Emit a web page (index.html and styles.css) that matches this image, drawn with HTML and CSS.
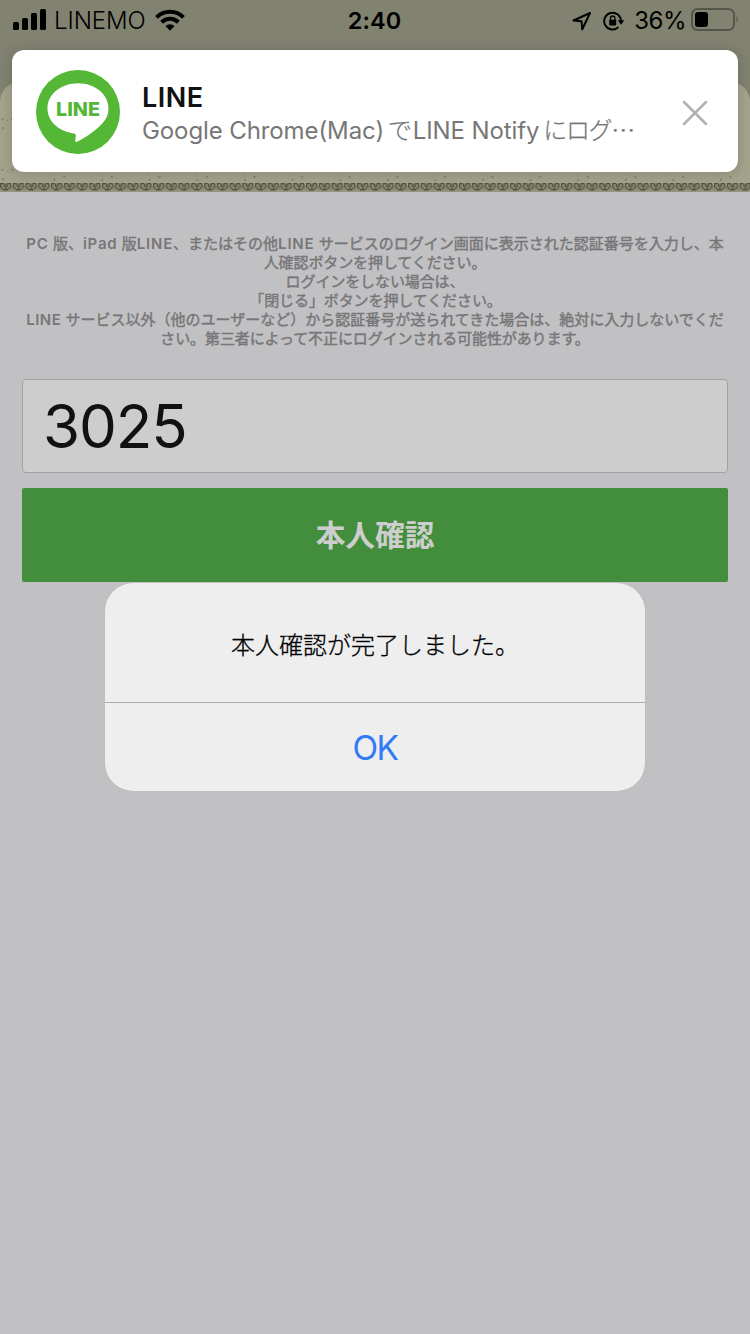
FILE: index.html
```
<!DOCTYPE html>
<html lang="ja">
<head>
<meta charset="utf-8">
<title>本人確認</title>
<link rel="stylesheet" href="styles.css">
</head>
<body>
<div class="screen">
  <header class="header">
    <div class="status">
      <div class="status-side">
        <svg class="signal" width="34" height="22" viewBox="0 0 34 22"><rect x="0" y="13" width="6" height="8" rx="1.6"/><rect x="9" y="9" width="6" height="12" rx="1.6"/><rect x="18" y="4" width="6" height="17" rx="1.6"/><rect x="27" y="0" width="6" height="21" rx="1.6"/></svg>
        <span class="carrier">LINEMO</span>
        <svg class="wifi" width="30" height="22" viewBox="0 0 30 22"><g fill="none" stroke="#000" stroke-width="4"><path d="M1.5 8.3a19 19 0 0 1 27 0"/><path d="M6.6 13.3a12 12 0 0 1 16.8 0"/></g><path d="M15 21.7l-4.6-4.6a6.5 6.5 0 0 1 9.2 0z"/></svg>
      </div>
      <span class="time">2:40</span>
      <div class="status-side status-right">
        <svg class="location" width="20" height="20" viewBox="0 0 20 20"><path d="M18 2L1.500 9.500l8 .8.8 8z" fill="none" stroke="#000" stroke-width="2" stroke-linejoin="round"/></svg>
        <svg class="lock" width="22" height="20" viewBox="0 0 22 20"><path d="M15.500 16.100A8.400 8.400 0 1 1 18 10.200" fill="none" stroke="#000" stroke-width="1.900"/><path d="M14.800 9.200h6.600l-3.400 4.600z"/><rect x="6.200" y="8.800" width="7" height="5.600" rx=".8"/><path d="M7.500 9V7.200a2.200 2.200 0 0 1 4.400 0V9" fill="none" stroke="#000" stroke-width="1.300"/></svg>
        <span class="percent">36%</span>
        <svg class="battery" width="48" height="24" viewBox="0 0 48 24"><rect x="1" y="1" width="42" height="21" rx="5.500" fill="none" stroke="#55554a" stroke-width="2"/><rect x="4" y="4" width="13" height="15" rx="3"/><path d="M45.500 8q2.500 3.500 0 7z" fill="#55554a"/></svg>
      </div>
    </div>
    <div class="sheet">
      <svg class="texture" width="750" height="110">
        <defs>
          <pattern id="dots" width="48" height="51" patternUnits="userSpaceOnUse" y="31"><path d="M1.500 5h2v2h-2zM11 5h2v2h-2zM7 7h1.300v1.300h-1.300zM2 14h2v2h-2z" fill="#858570"/></pattern>
          <pattern id="specks" width="47.600" height="30" patternUnits="userSpaceOnUse" x="5" y="80"><path d="M0 12h1v1h-1zM1 17h2v2h-2zM10.500 14h2v2h-2z" fill="#858570"/></pattern>
          <pattern id="grass" width="12.750" height="11" patternUnits="userSpaceOnUse" y="99">
            <rect y="4.500" width="12.750" height="4.500" fill="#88886f"/><rect y="9" width="12.750" height="2" fill="#95957d"/>
            <path d="M1 2h9.500v4l-3 3h-3l-3.500-3z" fill="#8a8a72"/>
            <path d="M0 2h4v1.300h-4zM7 2h4v1.300h-4zM0 3h1.300v3.500h-1.300zM10 3h1.300v3.500h-1.300zM4 3h1.300v3h-1.300zM6.300 3h1.300v3h-1.300zM1.300 6.500h1.500v1.500h-1.500zM8.500 6.500h1.500v1.500h-1.500zM2.800 8h5.500v1.500h-5.500zM5.200 5.500h1.300v2.500h-1.300z" fill="#525240"/>
          </pattern>
        </defs>
        <path d="M0 32h13v72h-13zM738 32h12v72h-12z" fill="url(#dots)"/>
        <rect x="50" y="87" width="690" height="12" fill="url(#specks)"/>
        <rect y="99" width="750" height="11" fill="url(#grass)"/>
      </svg>
    </div>
  </header>
  <main class="content">
    <p class="notice">
      <span class="line line-wide"><span class="lat">PC</span> 版、<span class="lat">iPad</span> 版<span class="lat">LINE</span>、またはその他<span class="lat">LINE</span> サービスのログイン画面に表示された認証番号を入力し、本</span>
      <span class="line">人確認ボタンを押してください。</span>
      <span class="line">ログインをしない場合は、</span>
      <span class="line line-bracket">「閉じる」ボタンを押してください。</span>
      <span class="line line-full"><span class="lat">LINE</span> サービス以外（他のユーザーなど）から認証番号が送られてきた場合は、絶対に入力しないでくだ</span>
      <span class="line">さい。第三者によって不正にログインされる可能性があります。</span>
    </p>
    <div class="code">3025</div>
    <div class="submit">本人確認</div>
  </main>
  <section class="banner">
    <svg class="logo" width="84" height="84" viewBox="0 0 84 84"><circle cx="42" cy="42" r="42" fill="#54b736"/><path d="M42 13.300C25 13.300 11.500 24.200 11.500 38.500c0 13 11 22.800 26.500 25 2 .3 2 1.500 1.600 4l-.4 3.500c0 1 .6 1.300 1.800.7 8-4 18.500-10.700 25-18C70.500 49 72.500 44.500 72.500 38.500 72.500 24.200 59 13.300 42 13.300z" fill="#fff"/><text class="logo-text" x="20" y="46" textLength="44" lengthAdjust="spacingAndGlyphs">LINE</text></svg>
    <div class="banner-text">
      <div class="banner-title">LINE</div>
      <div class="banner-sub"><span class="sub-lat">Google Chrome(Mac)</span><span class="sub-ja">で</span><span class="sub-lat">LINE Notify</span><span class="sub-ja">にログ…</span></div>
    </div>
    <svg class="close" width="26" height="26" viewBox="0 0 26 26"><path d="M2 2l22 22M24 2L2 24" stroke="#b1b1b1" stroke-width="2.500" stroke-linecap="round"/></svg>
  </section>
  <section class="dialog">
    <div class="dialog-message">本人確認が完了しました。</div>
    <div class="dialog-ok">OK</div>
  </section>
</div>
</body>
</html>
```
FILE: styles.css
```
* { box-sizing: border-box; }
body { margin: 0; font-family: Inter, "Noto Sans CJK JP", sans-serif; }
svg { display: block; flex: none; }
.screen { position: relative; width: 750px; height: 1334px; overflow: hidden; background: #c1c1c3; }
.header { height: 192px; background: #828271; display: flex; flex-direction: column; }
.status { height: 82px; padding: 0 11px 42px 13px; display: grid; grid-template-columns: 1fr auto 1fr; align-items: center; font-size: 24px; color: #000; }
.status-side { display: flex; align-items: center; }
.status-right { justify-content: flex-end; }
.carrier { margin: 1px 0 0 7px; font-weight: 300; letter-spacing: -.1px; }
.wifi { margin-left: 9px; }
.time { margin: 1px 3px 0 0; font-weight: 600; font-size: 23.5px; letter-spacing: .1px; }
.lock { margin: 1px 0 0 11px; }
.location { margin-top: 1px; }
.percent { margin: 1px 0 0 9px; letter-spacing: -.5px; }
.battery { margin-left: 5px; }
.sheet { height: 110px; border-radius: 20px 20px 0 0; background: #a4a48d; overflow: hidden; }
.content { padding: 42px 22px 0; }
.notice { margin: 0; font-size: 15px; line-height: 19px; font-weight: 400; -webkit-text-stroke: .45px #777779; letter-spacing: -.1px; color: #777779; }
.line { display: block; text-align: center; white-space: nowrap; }
.line-wide { letter-spacing: 0; }
.line-full { letter-spacing: 0; }
.line-bracket { padding-left: 1px; }
.lat { font-weight: 600; letter-spacing: .5px; -webkit-text-stroke: 0; }
.line-wide .lat { letter-spacing: .8px; }
.code { height: 94px; margin-top: 31px; padding: 0 20px; border: 1px solid #a2a2a5; border-radius: 4px; background: #cdcdcd; color: #111; font-size: 60px; line-height: 93px; letter-spacing: -1.100px; }
.submit { height: 94px; margin-top: 15px; border-radius: 2px; background: #428e3d; color: #cecece; font-size: 29.700px; font-weight: 700; line-height: 94px; text-align: center; }
.banner { position: absolute; left: 12px; top: 50px; width: 726px; height: 122px; padding: 2px 30px 0 24px; display: flex; align-items: center; border-radius: 12px; background: #fff; box-shadow: 0 2px 14px rgba(0,0,0,.18); }
.banner-text { flex: 1; margin: 3px 0 0 22px; white-space: nowrap; }
.banner-title { font-size: 27px; line-height: 32px; font-weight: 600; letter-spacing: .5px; color: #111; }
.banner-sub { font-size: 24px; line-height: 30px; color: #777; }
.sub-lat { letter-spacing: -.100px; }
.sub-ja { margin: 0 2px 0 4px; font-family: "Noto Sans CJK JP", sans-serif; font-weight: 300; -webkit-text-stroke: .25px #777; letter-spacing: -1.400px; }
.close { margin-top: 2px; }
.logo-text { font: 800 19px Inter, sans-serif; fill: #54b736; }
.dialog { position: absolute; left: 105px; top: 583px; width: 540px; height: 208px; border-radius: 28px; background: #eeeeef; box-shadow: 0 0 1px #aaa; text-align: center; }
.dialog-message { height: 120px; padding-top: 43px; border-bottom: 1px solid #adadb0; font-size: 24px; font-weight: 300; -webkit-text-stroke: .3px #000; line-height: 40px; color: #000; }
.dialog-ok { font-size: 33.500px; line-height: 90px; letter-spacing: -1.500px; color: #317bf7; }
```
